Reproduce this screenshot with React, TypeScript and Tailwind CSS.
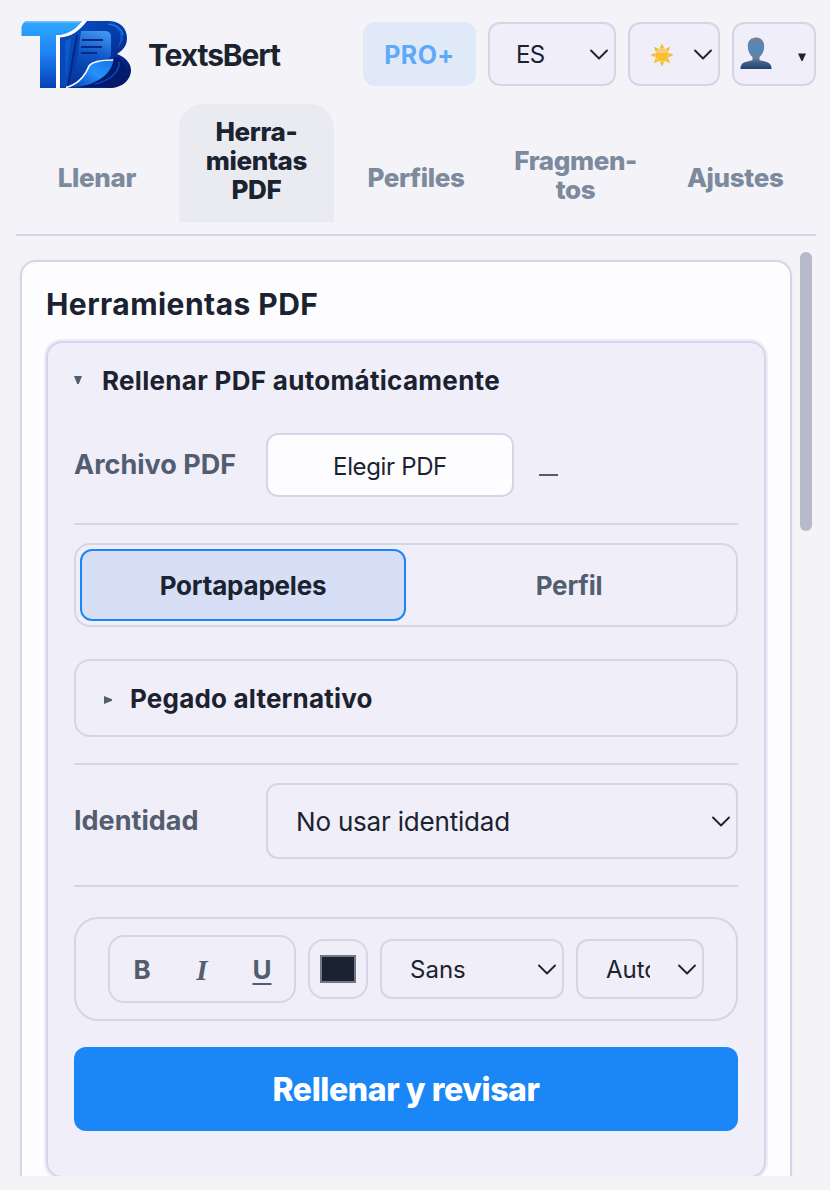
import clsx from 'clsx'

function Logo() {
  return (
    <svg width="112" height="70" viewBox="0 0 112 70" fill="none">
      <defs>
        <linearGradient id="tee" x1="0" y1="0" x2="0" y2="1">
          <stop offset="0" stopColor="#2fa9fd" />
          <stop offset="0.45" stopColor="#1f86f8" />
          <stop offset="1" stopColor="#0640b4" />
        </linearGradient>
        <linearGradient id="bee" x1="0" y1="0" x2="1" y2="1">
          <stop offset="0" stopColor="#0650c8" />
          <stop offset="0.5" stopColor="#053ba8" />
          <stop offset="1" stopColor="#02125e" />
        </linearGradient>
        <linearGradient id="sheet" x1="0.6" y1="0" x2="0.4" y2="1">
          <stop offset="0" stopColor="#3f92ee" />
          <stop offset="0.45" stopColor="#0c55c6" />
          <stop offset="1" stopColor="#05349a" />
        </linearGradient>
        <linearGradient id="curl" x1="1" y1="0" x2="0" y2="1">
          <stop offset="0" stopColor="#1670e0" />
          <stop offset="0.5" stopColor="#2590fb" />
          <stop offset="1" stopColor="#0541b5" />
        </linearGradient>
      </defs>
      <path
        d="M66 2H88C100 2 107 9 107 19C107 27 103 31 97 35C105 38 111 44 111 51C111 61 102 69 90 69H40V18C53 17 60 9 66 2Z"
        fill="url(#bee)"
      />
      <path d="M41 19C48 18 53 16 57 12L48 68H41Z" fill="#0849b8" />
      <path d="M45 22L51 19L46 60Z" fill="#0c5bd2" />
      <path d="M57 16L48 67" stroke="#04277f" strokeWidth="2" />
      <path d="M88 5C100 8 104 17 97 29C107 21 104 9 92 4Z" fill="#0f55c4" />
      <path d="M88 5C97 6 102 10 103 16" stroke="#1f7df0" strokeWidth="1.2" />
      <path d="M61 12H85C89 12 91 14 91 18V36C91 39 87 41 82 42C72 42 69 46 66 53L54 66Z" fill="url(#sheet)" />
      <path d="M62 21H83M61 28H82M61 34H77" stroke="#042a86" strokeWidth="2" />
      <path d="M94 37C94 40 92 41 88 42C79 42 72 43 69 48C65 57 60 64 50 68C72 68 92 60 94 37Z" fill="url(#curl)" />
      <path d="M94 38C94 53 80 63 61 68H90C104 66 112 51 99 39Z" fill="#031a6e" />
      <path d="M99 43C100 54 88 62 75 65" stroke="#0c4cba" strokeWidth="1.5" />
      <path d="M93 41C82 41 73 42 69 47C65 57 59 65 46 68.500" stroke="#ffffff" strokeWidth="1.700" />
      <path d="M8 2H62C57 9 51 15 40 16H36V69H20V17H1.500V9C2 5 4 2 8 2Z" fill="url(#tee)" />
      <path d="M5 3.500C6 2.500 7 2 9 2H62L61 3.500Z" fill="#7cbcf8" />
      <path d="M67 2C60 11 52 18 39.500 18.500V69H36V16H41C51 14 58 8 63 2Z" fill="#ffffff" />
    </svg>
  )
}

function Chevron() {
  return (
    <svg className="shrink-0" width="18" height="11" viewBox="0 0 18 11" fill="none">
      <path d="M1 1.500L9 9.500L17 1.500" stroke="#1b2230" strokeWidth="1.8" strokeLinecap="round" strokeLinejoin="round" />
    </svg>
  )
}

function SunIcon() {
  const rays = [0, 45, 90, 135, 180, 225, 270, 315]
  return (
    <svg className="mt-px" width="24" height="24" viewBox="0 0 24 24">
      {rays.map((angle) => (
        <path key={angle} d="M12 0.500L14 5H10Z" fill="#f5b82e" transform={`rotate(${angle} 12 12)`} />
      ))}
      <circle cx="12" cy="12" r="6.800" fill="#fbbf2d" />
      <path d="M5.500 10A6.800 6.800 0 0 1 18.500 10Z" fill="#f3cf7b" />
    </svg>
  )
}

function UserIcon() {
  return (
    <svg width="32" height="33" viewBox="0 0 32 33">
      <defs>
        <linearGradient id="person" x1="0" y1="0" x2="0" y2="1">
          <stop offset="0" stopColor="#75808f" />
          <stop offset="0.35" stopColor="#5188c0" />
          <stop offset="0.65" stopColor="#6b7f96" />
          <stop offset="0.8" stopColor="#3f5f8a" />
          <stop offset="1" stopColor="#24436e" />
        </linearGradient>
      </defs>
      <path
        d="M16 0.500C21 0.500 24.200 4 24.200 9C24.200 14 22.500 17.500 19.500 20V23C23 24.500 28 24.500 30 27C31.200 28.500 31.500 30 31.500 32H0.500C0.500 30 0.800 28.500 2 27C4 24.500 9 24.500 12.500 23V20C9.500 17.500 7.800 14 7.800 9C7.800 4 11 0.500 16 0.500Z"
        fill="url(#person)"
      />
    </svg>
  )
}

const tabs = [
  { lines: ['Llenar'], pad: 'pb-[30px]' },
  { lines: ['Herra-', 'mientas', 'PDF'], pad: 'pb-[18px]', active: true },
  { lines: ['Perfiles'], pad: 'pb-[30px]' },
  { lines: ['Fragmen-', 'tos'], pad: 'pb-[18px]' },
  { lines: ['Ajustes'], pad: 'pb-[30px]' },
]

export default function App() {
  return (
    <div className="flex h-[1190px] w-[830px] flex-col overflow-hidden bg-[#f3f3f8] font-['Inter',sans-serif] text-[#1b2230]">
      {/* Top bar */}
      <header className="flex h-[104px] items-start pr-[14px] pl-[20px]">
        <div className="mt-[19px]">
          <Logo />
        </div>
        <div className="mt-[35px] ml-[16px] text-[30px] leading-[40px] font-bold tracking-[-1.1px]">TextsBert</div>
        <div className="mt-[22px] ml-auto flex h-16 gap-3">
          <button className="w-[113px] rounded-xl bg-[#dfe9f8] pt-[3px] text-[25px] font-bold tracking-[0.4px] text-[#5eaaf8]">PRO+</button>
          <button className="flex w-32 items-center justify-between rounded-xl border-2 border-[#d7d4e8] bg-[#f0eef8] pr-[6px] pl-[26px] text-[24px] tracking-[-0.8px]">
            <span className="pt-[2px]">ES</span>
            <Chevron />
          </button>
          <button className="flex w-[92px] items-center justify-between rounded-xl border-2 border-[#d7d4e8] bg-[#f0eef8] pr-[6px] pl-[20px]">
            <SunIcon />
            <Chevron />
          </button>
          <button className="flex w-[84px] items-center justify-between rounded-xl border-2 border-[#d7d4e8] bg-[#f0eef8] pr-[8px] pl-[6px]">
            <div className="-mt-[2px]">
              <UserIcon />
            </div>
            <svg className="mt-[5px]" width="8" height="8" viewBox="0 0 8 8">
              <path d="M0 0.500H8L4.500 8H3.500Z" fill="#1b2230" />
            </svg>
          </button>
        </div>
      </header>

      {/* Tabs */}
      <nav className="mr-[14px] ml-4 grid h-[132px] grid-cols-5 gap-1 border-b-2 border-[#d7d4e8] px-[3px] pb-3">
        {tabs.map((tab) => (
          <button
            key={tab.lines[0]}
            className={clsx(
              'flex flex-col items-center justify-end text-[26px] leading-[29px] font-extrabold tracking-[-0.35px]',
              tab.pad,
              tab.active ? 'rounded-t-3xl bg-[#eaebf1] text-[#1b2230]' : 'text-[#7d899c]',
            )}
          >
            {tab.lines.map((line) => (
              <span key={line}>{line}</span>
            ))}
          </button>
        ))}
      </nav>

      {/* Scroll area */}
      <div className="flex h-[940px] overflow-hidden pt-4 pl-5">
        <main className="mt-2 h-[960px] w-[772px] rounded-2xl border-2 border-[#d7d4e8] bg-[#fdfdff] px-6 shadow-[0_0_6px_rgba(30,30,60,0.04)]">
          <h1 className="mt-[22px] h-[57px] text-[30px] leading-[40px] font-bold tracking-[0.45px]">Herramientas PDF</h1>

          <section className="h-[837px] rounded-2xl border-2 border-[#d7d4e8] bg-[#f0eef8] px-[26px] shadow-[0_0_0_2px_#eaeefb]">
            <div className="flex h-[90px] items-start pt-[20px]">
              <svg className="mt-[13px]" width="8" height="8" viewBox="0 0 8 8">
                <path d="M0 0H8L4.800 8H3.200Z" fill="#535d70" />
              </svg>
              <h2 className="ml-[20px] text-[26px] leading-[36px] font-bold tracking-[0.3px]">Rellenar PDF automáticamente</h2>
            </div>

            <div className="flex h-[92px] items-start border-b-2 border-[#d7d4e8]">
              <div className="w-48 pt-[13px] text-[27px] leading-[38px] font-bold text-[#535d70]">Archivo PDF</div>
              <button className="h-16 w-[248px] rounded-xl border-2 border-[#d7d4e8] bg-[#fdfdff] pt-[3px] text-[24px] tracking-[-0.35px]">Elegir PDF</button>
              <div className="mt-[41px] ml-[25px] h-[2px] w-[19px] bg-[#535d70]" />
            </div>

            <div className="mt-[18px] flex h-[84px] rounded-2xl border-2 border-[#d7d4e8] p-1">
              <button className="w-[326px] rounded-xl border-2 border-[#1b86f5] bg-[#d6dff6] pt-px text-[26px] font-bold tracking-[-0.2px]">Portapapeles</button>
              <button className="flex-1 pt-px text-[26px] font-bold tracking-[-0.2px] text-[#535d70]">Perfil</button>
            </div>

            <div className="mt-8 flex h-[78px] items-center rounded-2xl border-2 border-[#d7d4e8] pl-[28px]">
              <svg className="mt-[3px]" width="8" height="8" viewBox="0 0 8 8">
                <path d="M0 0L8 3.200V4.800L0 8Z" fill="#535d70" />
              </svg>
              <h3 className="ml-[18px] text-[26px] font-bold tracking-[0.2px]">Pegado alternativo</h3>
            </div>

            <div className="mt-[26px] flex h-[124px] items-start border-y-2 border-[#d7d4e8] pt-[18px]">
              <div className="w-48 pt-[19px] text-[27px] leading-[38px] font-bold text-[#535d70]">Identidad</div>
              <button className="flex h-19 flex-1 items-center justify-between rounded-xl border-2 border-[#d7d4e8] pr-[6px] pl-[28px] text-[26px] tracking-[-0.2px]">
                <span className="pt-px">No usar identidad</span>
                <Chevron />
              </button>
            </div>

            {/* Text format toolbar */}
            <div className="mt-[30px] flex h-[104px] items-center gap-3 rounded-3xl border-2 border-[#d7d4e8] px-8">
              <div className="grid h-[68px] w-[188px] grid-cols-3 items-center rounded-2xl border-2 border-[#d7d4e8] px-[2px] pt-[2px] text-center text-[26px] leading-[30px] font-bold text-[#535d70]">
                <span>B</span>
                <span className="font-['Liberation_Serif',serif] text-[29px] italic">I</span>
                <span className="underline decoration-2 underline-offset-[4px]">U</span>
              </div>
              <div className="flex h-[60px] w-[60px] items-center justify-center rounded-2xl border-2 border-[#d7d4e8]">
                <div className="h-7 w-9 border-2 border-[#747785] bg-[#1b2230]" />
              </div>
              <button className="flex h-[60px] w-[184px] items-center justify-between rounded-xl border-2 border-[#d7d4e8] pr-[6px] pl-[28px] text-[24px]">
                <span className="pt-[2px]">Sans</span>
                <Chevron />
              </button>
              <button className="flex h-[60px] w-32 items-center justify-between rounded-xl border-2 border-[#d7d4e8] pr-[6px] pl-[28px] text-[24px]">
                <span className="w-[44px] overflow-hidden pt-[2px] text-left">Auto</span>
                <Chevron />
              </button>
            </div>

            <button className="mt-[26px] h-[84px] w-full rounded-xl bg-[#1b86f5] pt-[2px] text-[32px] font-extrabold tracking-[-0.4px] text-white">Rellenar y revisar</button>
          </section>
        </main>
        <div className="ml-2 h-[279px] w-3 rounded-full bg-[#b7bac8]" />
      </div>
    </div>
  )
}
